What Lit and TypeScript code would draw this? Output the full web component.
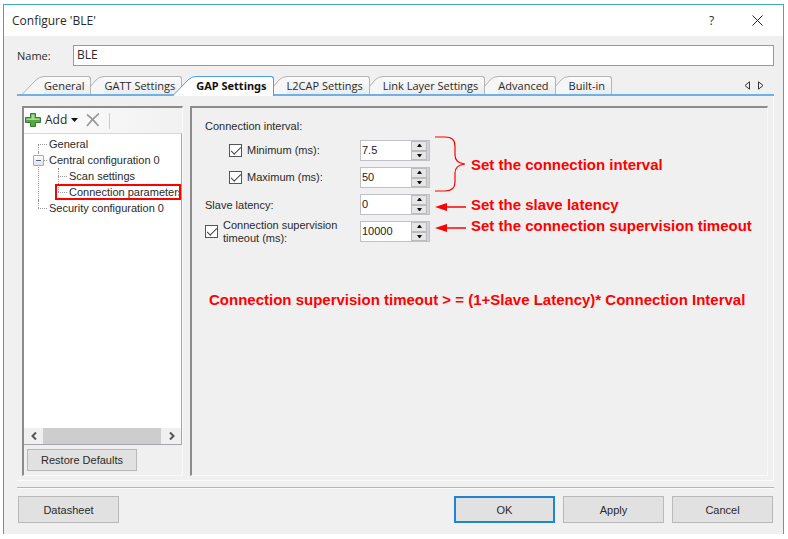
import { LitElement, html, css, svg } from "lit";
import { customElement, property, state } from "lit/decorators.js";
import { classMap } from "lit/directives/class-map.js";

@customElement("number-spinner")
class NumberSpinner extends LitElement {
  @property() value = "0";
  @property() label = "";

  static styles = css`
    :host {
      display: flex;
      box-sizing: border-box;
      height: 21px;
      border: 1px solid #bfc1c6;
      background: #fff;
    }
    input {
      flex: 1;
      min-width: 0;
      margin: 0;
      padding: 0 0 2px 1px;
      border: 0;
      outline: 0;
      background: none;
      color: #222;
      font: 11px "Liberation Sans", Arial, sans-serif;
      appearance: textfield;
    }
    input::-webkit-inner-spin-button {
      appearance: none;
      display: none;
    }
    .steps {
      display: flex;
      flex-direction: column;
      width: 16px;
      padding-right: 2px;
      background: #d0d2d7;
    }
    button {
      flex: 1;
      display: grid;
      place-items: center;
      min-height: 0;
      padding: 0;
      border: 1px solid #bcbcbc;
      background: #e6e6e6;
    }
    svg {
      display: block;
      width: 5px;
      height: 3px;
    }
  `;

  private step(by: number) {
    this.value = String(Number(this.value) + by);
  }

  render() {
    return html`
      <input type="number" step="any" aria-label=${this.label} .value=${this.value} />
      <div class="steps">
        <button aria-label="Increase" @click=${() => this.step(1)}>
          <svg viewBox="0 0 5 3"><path d="M2 0H3L5 3H0z" fill="#111" /></svg>
        </button>
        <button aria-label="Decrease" @click=${() => this.step(-1)}>
          <svg viewBox="0 0 5 3"><path d="M2 3H3L5 0H0z" fill="#111" /></svg>
        </button>
      </div>
    `;
  }
}

const TABS = [
  "General",
  "GATT Settings",
  "GAP Settings",
  "L2CAP Settings",
  "Link Layer Settings",
  "Advanced",
  "Built-in",
];

@customElement("app-root")
class AppRoot extends LitElement {
  @state() private active = 2;

  static styles = css`
    :host {
      display: flex;
      box-sizing: border-box;
      min-height: 100vh;
      padding: 4px 4px 5px 3px;
      background: #fff;
      color: #2a2a2a;
      font: 11px/16px "Liberation Sans", Arial, sans-serif;
    }
    * {
      box-sizing: border-box;
    }
    button,
    input {
      font: inherit;
      color: inherit;
    }
    svg {
      display: block;
    }
    .dialog {
      flex: 1;
      min-width: 0;
      display: flex;
      flex-direction: column;
      border: 1px solid #3fa9b8;
      border-bottom: 0;
      background: #f0f0f0;
    }
    .title {
      display: flex;
      align-items: center;
      height: 31px;
      padding-left: 8px;
      background: #fff;
      font: 12px/16px "Open Sans", "Noto Sans", sans-serif;
    }
    .title h1 {
      flex: 1;
      margin: 0;
      font: inherit;
    }
    .title button {
      display: grid;
      place-items: center;
      width: 41px;
      height: 31px;
      padding: 0;
      border: 0;
      background: none;
    }
    .title .close {
      width: 51px;
    }
    .body {
      flex: 1;
      display: flex;
      flex-direction: column;
      padding: 9px 9px 11px 13px;
    }
    .name {
      display: flex;
      align-items: center;
      font: 11px/16px "Open Sans", "Noto Sans", sans-serif;
    }
    .name label {
      width: 56px;
    }
    .name input {
      flex: 1;
      min-width: 0;
      height: 21px;
      padding: 0 3px 2px;
      border: 1px solid #999;
      outline: 0;
      background: #fff;
      font-size: 12px;
    }
    .tabs {
      display: flex;
      align-items: flex-end;
      height: 30px;
      padding-left: 5px;
      border-bottom: 2px solid #6fb1e4;
      font: 11px/18px "Open Sans", "Noto Sans", sans-serif;
    }
    .tab {
      position: relative;
      display: flex;
      height: 18px;
      padding: 0;
      border: 0;
      background: none;
      white-space: nowrap;
    }
    .tab .slope {
      width: 13px;
      height: 18px;
      flex: none;
    }
    .tab .face {
      height: 18px;
      padding-right: 6px;
      border: 1px solid #b4b4b4;
      border-width: 1px 1px 0 0;
      border-top-right-radius: 3px;
      background: linear-gradient(#fbfbfb, #ececec);
    }
    .tab.first .slope,
    .tab.on .slope {
      width: 22px;
    }
    .tab.on {
      z-index: 1;
      height: 20px;
      margin: 0 0 -2px -8px;
      font-family: "Noto Sans", sans-serif;
      font-weight: 700;
      color: #111;
    }
    .tab.on .slope,
    .tab.on .face {
      height: 20px;
    }
    .tab.on .face {
      border-color: #4e9fe0;
      background: #fff;
    }
    .scrollers {
      display: flex;
      gap: 8px;
      margin-left: auto;
      padding: 0 10px 4px 0;
    }
    .scrollers button {
      padding: 0;
      border: 0;
      background: none;
    }
    .page {
      flex: 1;
      display: flex;
      gap: 7px;
      padding: 10px 5px 4px;
      border: 1px solid #fafafa;
      border-top: 0;
      border-left: 0;
    }
    .pane {
      border: 1px solid #fafafa;
      border-top: 2px solid #8c8c8c;
      border-left: 2px solid #8c8c8c;
    }
    .side {
      width: 161px;
      flex: none;
      display: flex;
      flex-direction: column;
    }
    .toolbar {
      display: flex;
      align-items: center;
      height: 25px;
      padding-left: 1px;
      background: linear-gradient(90deg, #fdfdfd, #f1f1f1);
      font: 12px/16px "Open Sans", "Noto Sans", sans-serif;
    }
    .toolbar button {
      display: flex;
      align-items: center;
      gap: 4px;
      padding: 0 0 2px;
      border: 0;
      background: none;
    }
    .toolbar .remove {
      margin-left: 8px;
      padding-right: 9px;
      border-right: 1px solid #ccc;
    }
    .treebox {
      flex: 1;
      display: flex;
      flex-direction: column;
      border: 1px solid #a5a5ab;
      border-top-color: #d8d8d8;
      border-left: 0;
      background: #fff;
      overflow: hidden;
    }
    .tree,
    .tree ul {
      margin: 0;
      padding: 0;
      list-style: none;
      white-space: nowrap;
    }
    .tree {
      flex: 1;
      padding: 2px 0 0 14px;
    }
    .tree li {
      position: relative;
      padding-left: 11px;
    }
    .tree ul li {
      margin-left: 9px;
    }
    .tree li::before {
      content: "";
      position: absolute;
      left: 0;
      top: 8px;
      width: 9px;
      border-top: 1px dotted #999;
    }
    .tree li::after {
      content: "";
      position: absolute;
      left: 0;
      top: 0;
      height: 100%;
      border-left: 1px dotted #999;
    }
    .tree > li:first-child::after {
      top: 8px;
    }
    .tree li:last-child::after {
      height: 8px;
    }
    .expander {
      position: absolute;
      z-index: 1;
      left: -5px;
      top: 3px;
      width: 11px;
      height: 11px;
      padding: 0;
      border: 1px solid #a8a8a8;
      border-radius: 1px;
      background: linear-gradient(#fff, #e2e2e2);
      display: grid;
      place-items: center;
    }
    .mark {
      position: absolute;
      z-index: 1;
      inset: 0 auto 0 -3px;
      width: 126px;
      border: 2px solid #f00;
    }
    .hscroll {
      display: flex;
      align-items: center;
      height: 16px;
      background: #f0f0f0;
    }
    .hscroll button {
      display: grid;
      place-items: center;
      width: 19px;
      padding: 0;
      border: 0;
      background: none;
    }
    .hscroll .thumb {
      height: 16px;
      width: 118px;
      margin-right: auto;
      background: #cdcdcd;
    }
    .push {
      height: 27px;
      width: 101px;
      padding: 0;
      border: 1px solid #b9b9b9;
      background: #e1e1e1;
    }
    .restore {
      width: 110px;
      height: 22px;
      margin: 4px 3px;
    }
    .form {
      flex: 1;
      min-width: 0;
      padding: 10px 4px 0 13px;
    }
    .form p {
      margin: 0;
    }
    .grid {
      display: grid;
      grid-template-columns: 155px 70px 1fr;
      grid-auto-rows: 27px;
      align-items: center;
      padding-top: 3px;
    }
    .check {
      display: flex;
      align-items: center;
      gap: 5px;
      line-height: 13px;
    }
    .check.inner {
      padding-left: 24px;
    }
    .check input {
      appearance: none;
      flex: none;
      width: 13px;
      height: 13px;
      margin: 0;
      border: 1px solid #555;
      background: #fff;
      display: grid;
      place-items: center;
    }
    .check input:checked::before {
      content: "";
      width: 9px;
      height: 4px;
      margin-top: -3px;
      border: solid #444;
      border-width: 0 0 1px 1px;
      transform: rotate(-45deg);
    }
    .note {
      display: flex;
      align-items: center;
      gap: 5px;
      padding-left: 5px;
      white-space: nowrap;
      color: #f00;
      font-weight: 700;
      font-size: 15px;
    }
    .note .arrow {
      margin-top: 4px;
    }
    .note.both {
      grid-row: 1 / span 2;
      grid-column: 3;
    }
    .note.both span {
      padding-top: 2px;
    }
    .note.raised {
      align-self: start;
    }
    .formula {
      padding: 47px 0 0 4px;
      color: #f00;
      font-weight: 700;
      font-size: 15px;
    }
    .actions {
      display: flex;
      gap: 8px;
      margin-top: 6px;
      padding: 8px 1px 0;
      border-top: 1px solid #b5b5b5;
      box-shadow: inset 0 1px #fafafa;
    }
    .actions .ok {
      margin-left: auto;
      border: 2px solid #1f83d6;
    }
  `;

  private slope(wide: boolean, on: boolean) {
    const d = wide ? "M0 18.5 L14 4 Q17.5 .5 22 .5" : "M0 10 L5 4 Q8 .5 13 .5";
    const h = on ? 20 : 18;
    const w = wide ? 22 : 13;
    return html`<svg class="slope" viewBox="0 0 ${w} ${h}">
      ${svg`<path d="${d} V${h} H0z" fill=${on ? "#fff" : "#f6f6f6"} />
      <path d=${d} fill="none" stroke=${on ? "#4e9fe0" : "#b4b4b4"} />`}
    </svg>`;
  }

  private arrow() {
    return html`<svg class="arrow" width="31" height="10" viewBox="0 0 31 10">
      <path d="M10 5H31" stroke="#f00" stroke-width="1.5" />
      <path d="M0 5 12 1V9z" fill="#f00" />
    </svg>`;
  }

  render() {
    return html`
      <section class="dialog">
        <header class="title">
          <h1>Configure 'BLE'</h1>
          <button aria-label="Help">?</button>
          <button class="close" aria-label="Close">
            <svg width="11" height="11" viewBox="0 0 11 11">
              <path d="M.5 .5 10.500 10.500M10.500 .5 .5 10.500" stroke="#222" fill="none" />
            </svg>
          </button>
        </header>
        <div class="body">
          <div class="name">
            <label for="name">Name:</label>
            <input id="name" type="text" value="BLE" />
          </div>
          <nav class="tabs">
            ${TABS.map((t, i) => {
              const on = i === this.active;
              return html`<button
                class=${classMap({ tab: true, on, first: i === 0 })}
                @click=${() => (this.active = i)}
              >
                ${this.slope(on || i === 0, on)}<span class="face">${t}</span>
              </button>`;
            })}
            <div class="scrollers">
              <button aria-label="Previous tabs">
                <svg width="6" height="9" viewBox="0 0 6 9">
                  <path d="M5.500 .8V8.200L1 4.500z" fill="none" stroke="#333" />
                </svg>
              </button>
              <button aria-label="Next tabs">
                <svg width="6" height="9" viewBox="0 0 6 9">
                  <path d="M.5 .8V8.200L5 4.500z" fill="none" stroke="#333" />
                </svg>
              </button>
            </div>
          </nav>
          <div class="page">
            <aside class="pane side">
              <div class="toolbar">
                <button>
                  <svg width="16" height="16" viewBox="0 0 16 16">
                    <path
                      d="M5.500 1.500h5v4h5v5h-5v4h-5v-4h-5v-5h5z"
                      fill="#58a845"
                      stroke="#3a7a35"
                    />
                    <path d="M6.500 2.500h3v4h5v1.500h-13v-1.500h5z" fill="#a5d99a" />
                  </svg>
                  Add
                  <svg width="7" height="4" viewBox="0 0 7 4">
                    <path d="M0 0H7L3.500 4z" fill="#111" />
                  </svg>
                </button>
                <button class="remove" aria-label="Delete">
                  <svg width="14" height="14" viewBox="0 0 14 14">
                    <path
                      d="M1 1.500 Q7 6 12.500 13M13 .5 Q6 6 1 13"
                      fill="none"
                      stroke="#999"
                      stroke-width="1.600"
                    />
                  </svg>
                </button>
              </div>
              <div class="treebox">
                <ul class="tree">
                  <li>General</li>
                  <li>
                    <button class="expander" aria-label="Collapse">
                      <svg width="5" height="1" viewBox="0 0 5 1">
                        <path d="M0 0H5V1H0z" fill="#4a63a8" />
                      </svg></button
                    >Central configuration 0
                    <ul>
                      <li>Scan settings</li>
                      <li>Connection parameters<span class="mark"></span></li>
                    </ul>
                  </li>
                  <li>Security configuration 0</li>
                </ul>
                <div class="hscroll">
                  <button aria-label="Scroll left">
                    <svg width="6" height="8" viewBox="0 0 6 8">
                      <path d="M5 .5 1.500 4 5 7.500" fill="none" stroke="#555" stroke-width="2" />
                    </svg>
                  </button>
                  <div class="thumb"></div>
                  <button aria-label="Scroll right">
                    <svg width="6" height="8" viewBox="0 0 6 8">
                      <path d="M1 .5 4.500 4 1 7.500" fill="none" stroke="#555" stroke-width="2" />
                    </svg>
                  </button>
                </div>
              </div>
              <button class="push restore">Restore Defaults</button>
            </aside>
            <main class="pane form">
              <p>Connection interval:</p>
              <div class="grid">
                <label class="check inner"><input type="checkbox" checked />Minimum (ms):</label>
                <number-spinner value="7.5" label="Minimum (ms)"></number-spinner>
                <div class="note both">
                  <svg width="31" height="56" viewBox="0 0 31 56">
                    <path
                      d="M0 1H10Q20 1 20 10V19Q20 27 30 28Q20 29 20 37V46Q20 55 10 55H0"
                      fill="none"
                      stroke="#f00"
                      stroke-width="1.200"
                    />
                  </svg>
                  <span>Set the connection interval</span>
                </div>
                <label class="check inner"><input type="checkbox" checked />Maximum (ms):</label>
                <number-spinner value="50" label="Maximum (ms)"></number-spinner>
                <span>Slave latency:</span>
                <number-spinner value="0" label="Slave latency"></number-spinner>
                <div class="note">${this.arrow()}<span>Set the slave latency</span></div>
                <label class="check"
                  ><input type="checkbox" checked /><span
                    >Connection supervision<br />timeout (ms):</span
                  ></label
                >
                <number-spinner value="10000" label="Connection supervision timeout"></number-spinner>
                <div class="note raised">
                  ${this.arrow()}<span>Set the connection supervision timeout</span>
                </div>
              </div>
              <p class="formula">
                Connection supervision timeout &gt; = (1+Slave Latency)* Connection Interval
              </p>
            </main>
          </div>
          <footer class="actions">
            <button class="push">Datasheet</button>
            <button class="push ok">OK</button>
            <button class="push">Apply</button>
            <button class="push">Cancel</button>
          </footer>
        </div>
      </section>
    `;
  }
}
